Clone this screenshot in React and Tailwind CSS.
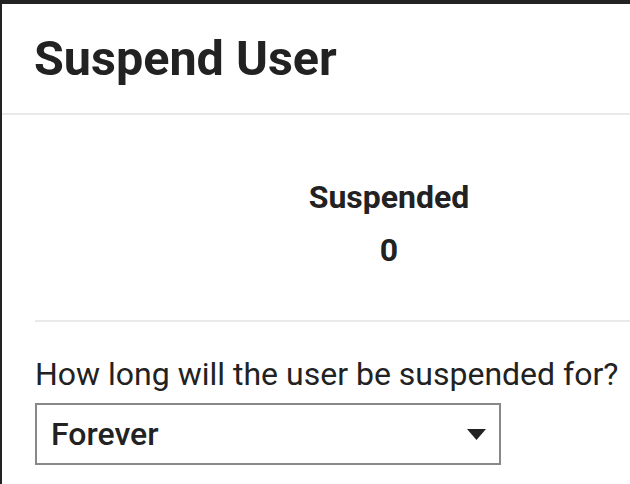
export default function App() {
  return (
    <div className="w-[630px] h-[484px] overflow-hidden bg-[#222222] pt-[4px] pl-[2px]" style={{ fontFamily: 'Roboto, sans-serif' }}>
      <div className="w-[774px] h-[480px] bg-white text-[#222222]">
        <div className="h-[111px] border-b-2 border-[#e9e9e9] pl-[32px] pt-[25px]">
          <h1 className="text-[48.5px] font-bold leading-[60px]">Suspend User</h1>
        </div>
        <div className="px-[33px]">
          <div className="h-[207px] border-b-2 border-[#e9e9e9] flex flex-col items-center pt-[63px]">
            <div className="text-[32px] font-bold leading-[38px]">Suspended</div>
            <div className="text-[32px] font-bold leading-[38px] mt-[15px]">0</div>
          </div>
          <div className="pt-[32px]">
            <div className="text-[32px] leading-[40px]">How long will the user be suspended for?</div>
            <div className="mt-[9px] w-[466px] h-[62px] border-2 border-[#888888] flex items-center justify-between pl-[14px] pr-[13px]">
              <span className="text-[32px] font-medium leading-[40px]">Forever</span>
              <svg width="19" height="11" viewBox="0 0 19 11"><path d="M0 0H19L9.5 11Z" fill="#222222" /></svg>
            </div>
          </div>
        </div>
      </div>
    </div>
  );
}
